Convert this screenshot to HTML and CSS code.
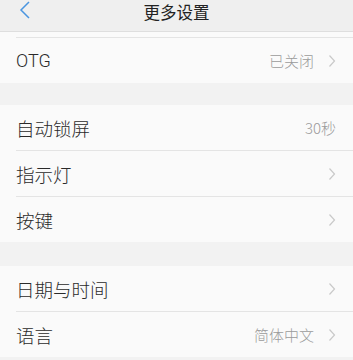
FILE: index.html
```html
<!DOCTYPE html>
<html lang="zh-CN">
<head>
  <meta charset="UTF-8">
  <title>更多设置</title>
  <link rel="stylesheet" href="styles.css">
</head>
<body>
  <div class="topbar">
    <span class="back">
      <svg width="14" height="20" viewBox="0 0 14 20"><path d="M11 2 L3 10 L11 18" fill="none" stroke="#4a95e0" stroke-width="1.5"/></svg>
    </span>
    <span class="title">更多设置</span>
  </div>

  <div class="group">
    <div class="row stub"></div>
    <div class="row"><span class="label latin">OTG</span><span class="value">已关闭</span><svg class="arrow" width="8" height="14" viewBox="0 0 8 14"><path d="M1.5 1.5 L6.5 7 L1.5 12.5" fill="none" stroke="#c9c9c9" stroke-width="1.2"/></svg></div>
  </div>

  <div class="gap"></div>

  <div class="group">
    <div class="row"><span class="label">自动锁屏</span><span class="value">30秒</span></div>
    <div class="row"><span class="label">指示灯</span><svg class="arrow" width="8" height="14" viewBox="0 0 8 14"><path d="M1.5 1.5 L6.5 7 L1.5 12.5" fill="none" stroke="#c9c9c9" stroke-width="1.2"/></svg></div>
    <div class="row"><span class="label">按键</span><svg class="arrow" width="8" height="14" viewBox="0 0 8 14"><path d="M1.5 1.5 L6.5 7 L1.5 12.5" fill="none" stroke="#c9c9c9" stroke-width="1.2"/></svg></div>
  </div>

  <div class="gap big"></div>

  <div class="group">
    <div class="row"><span class="label">日期与时间</span><svg class="arrow" width="8" height="14" viewBox="0 0 8 14"><path d="M1.5 1.5 L6.5 7 L1.5 12.5" fill="none" stroke="#c9c9c9" stroke-width="1.2"/></svg></div>
    <div class="row"><span class="label">语言</span><span class="value">简体中文</span><svg class="arrow" width="8" height="14" viewBox="0 0 8 14"><path d="M1.5 1.5 L6.5 7 L1.5 12.5" fill="none" stroke="#c9c9c9" stroke-width="1.2"/></svg></div>
  </div>
</body>
</html>
```

FILE: styles.css
```css
body { margin: 0; background: #f2f2f2; font-family: "Noto Sans CJK SC", "Noto Sans", sans-serif; color: #2a2a2a; }
.topbar { height: 31px; background: #efefef; border-bottom: 1px solid #dedede; position: relative; display: flex; justify-content: center; }
.back { position: absolute; left: 18px; top: 0; }
.title { font-size: 16.5px; line-height: 22px; padding-top: 1px; color: #222; }
.group { background: #fafafa; }
.row { height: 45px; margin-left: 16px; padding-right: 17px; display: flex; align-items: center; border-bottom: 1px solid #e4e4e4; }
.row:last-child { border-bottom: none; }
.row.stub { height: 5px; }
.label { flex: 1; font-size: 18.5px; font-weight: 300; }
.label.latin { font-family: Roboto, "Noto Sans", sans-serif; font-size: 18px; }
.value { font-size: 15px; font-weight: 300; color: #9a9a9a; }
.arrow { margin-left: 14px; }
.gap { height: 22px; }
.gap.big { height: 24px; }
```
